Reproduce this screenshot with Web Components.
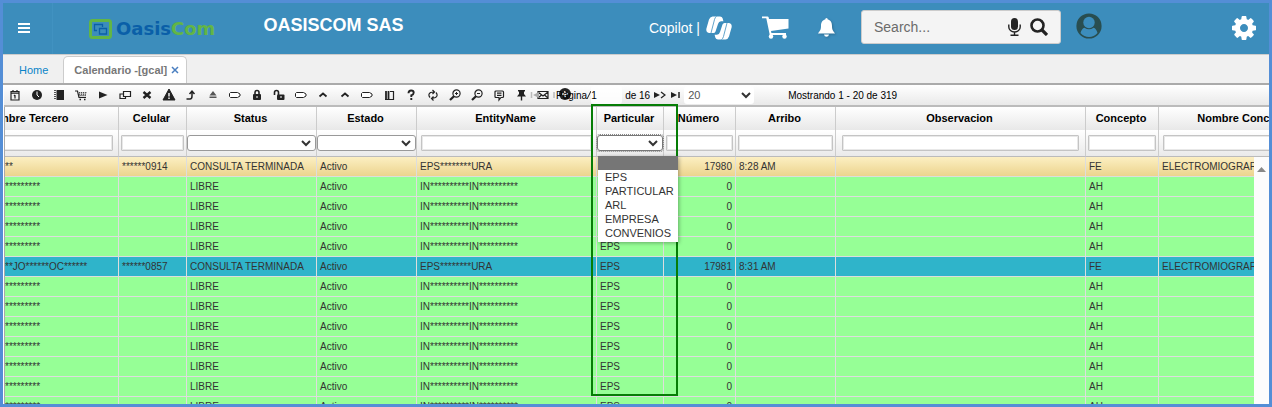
<!DOCTYPE html>
<html lang="es">
<head>
<meta charset="utf-8">
<title>OasisCom - Calendario</title>
<style>
  body { margin: 0; font-family: "Liberation Sans", Arial, sans-serif; }
</style>
</head>
<body>
<oc-app>
  <oc-topbar slot="top" company="OASISCOM SAS"></oc-topbar>
  <oc-tabs slot="tabs"></oc-tabs>
  <oc-toolbar slot="tools"></oc-toolbar>
  <oc-grid></oc-grid>
</oc-app>

<script>
class OcElement extends HTMLElement {
  mount(html) {
    this.attachShadow({ mode: 'open' }).innerHTML = html;
  }
}

customElements.define('oc-app', class extends OcElement {
  constructor() {
    super();
    this.mount(`
      <style>
        :host { display: flex; flex-direction: column; position: relative; box-sizing: border-box;
          height: 100vh; border: 3px solid #548ed6; background: #fff; overflow: hidden; }
        .panel { flex: 1; min-height: 0; display: flex; flex-direction: column;
          margin-left: 1px; border-left: 1px solid #aaa; }
        .focus { position: absolute; left: 588px; top: 101px; width: 83px; height: 288px;
          border: 2px solid #067d06; pointer-events: none; }
      </style>
      <slot name="top"></slot>
      <slot name="tabs"></slot>
      <div class="panel">
        <slot name="tools"></slot>
        <slot></slot>
      </div>
      <div class="focus"></div>`);
  }
});

customElements.define('oc-logo', class extends OcElement {
  constructor() {
    super();
    this.mount(`
      <style>
        :host { display: flex; align-items: center; gap: 4px; color: #0a5fa8;
          font: bold 18px/20px "DejaVu Sans", sans-serif; }
        svg { display: block; }
        b { color: #62b545; }
      </style>
      <svg width="23" height="20" viewBox="0 0 23 20" fill="none">
        <rect x="1.500" y="1.500" width="20" height="17" rx="2" stroke="#62b545" stroke-width="3"/>
        <path d="M8 11.500H5.500V5.500h8V8M10.500 9.500h7v5.500h-7z" stroke="#0a5fa8" stroke-width="1.300"/>
      </svg>
      <span>Oasis<b>Com</b></span>`);
  }
});

customElements.define('oc-topbar', class extends OcElement {
  constructor() {
    super();
    this.mount(`
      <style>
        :host { display: flex; align-items: center; height: 51px; box-sizing: border-box;
          background: #3c8dbc; color: #fff; font-size: 14px; }
        button, a { padding: 0; border: 0; background: none; color: inherit; display: flex; text-decoration: none; }
        svg { display: block; }
        .menu { width: 50px; height: 51px; box-sizing: border-box; padding: 20px 0 0 15px; border-right: 1px solid #4192c1; }
        oc-logo { margin: 0 0 0 36px; }
        h1 { flex: 1; margin: 0 0 8px 48px; font-size: 18px; line-height: 22px; font-weight: bold; white-space: nowrap; }
        .copilot { align-items: center; gap: 6px; white-space: nowrap; margin: 0 30px 2px 0; }
        .cart { margin: 0 29px 2px 0; }
        .bell { margin: 0 26px 2px 0; filter: drop-shadow(1px 1px 1px #2a6b92); }
        .search { display: flex; align-items: center; box-sizing: border-box; width: 200px; height: 34px;
          margin-bottom: 6px; padding: 0 12px; border: 1px solid #ccc; border-radius: 3px; background: #f4f4f4; color: #222; margin-top: 2px; }
        input { flex: 1; min-width: 0; padding: 0; border: 0; outline: 0; background: none; font: 14px "Liberation Sans", sans-serif; color: #333; }
        input::placeholder { color: #6b6b6b; opacity: 1; }
        .mic { margin-right: 9px; }
        .user { margin: 0 130px 6px 15px; }
        .gear { margin: 0 13px 2px 0; }
      </style>
      <button class="menu" aria-label="Menu"><svg width="12" height="10"><path d="M0 1h12M0 5h12M0 9h12" stroke="#fff" stroke-width="2"/></svg></button>
      <oc-logo></oc-logo>
      <h1></h1>
      <a class="copilot" href="#"><span>Copilot |</span>
        <svg width="26" height="24" viewBox="0 0 26 24" fill="#fff">
          <path d="M6.500 0.500H14q2 0 2.600 1.800l.8 3H15q-2.300.2-3 2.700L9.500 15.500q-.6 1.500-2 1.500H3Q0 16.500.3 13L3 3.500Q4 .8 6.500.5z"/>
          <path d="M19.500 23.500H12q-2 0-2.600-1.800l-.8-3H11q2.300-.2 3-2.700l2.500-7.500Q17.100 7 18.500 7H23q3 .5 2.700 4L23 20.500q-1 2.700-3.500 3z"/>
          <path d="M10.500 0.500Q9.200 1 8.500 3.500L5 17M21 7L17.500 20.500Q16.800 23 15.500 23.500" stroke="#3c8dbc" stroke-width=".8" fill="none"/>
        </svg></a>
      <button class="cart" aria-label="Carrito"><svg width="27" height="23" viewBox="0 0 27 23" fill="#fff">
        <path d="M0 .5h5.500q1 0 1.200 1L7 3h19.500v9.500L9 15l.4 2H24v2H7.800L4.300 2.300H0z"/>
        <circle cx="9" cy="20.500" r="2.200"/><circle cx="22.500" cy="20.500" r="2.200"/></svg></button>
      <button class="bell" aria-label="Avisos"><svg width="17" height="19" viewBox="0 0 17 19" fill="#fff">
        <path d="M8.500 0q1.300 0 1.300 1.500C13 2.200 14 5 14 8c0 4 1.200 5 3 7.500H0C1.800 13 3 12 3 8c0-3 1-5.800 4.200-6.500Q7.200 0 8.500 0zM6 16.500h5q-.4 2.300-2.500 2.300T6 16.500z"/></svg></button>
      <label class="search"><input type="text" placeholder="Search..." aria-label="Search">
        <svg class="mic" width="13" height="18" viewBox="0 0 13 18"><rect x="3" y="0" width="7" height="12" rx="3.500" fill="#222"/><path d="M.8 6.500v2.500a5.700 5 0 0 0 11.400 0V6.500M6.500 14v3M2.500 17.300h8" fill="none" stroke="#222" stroke-width="1.400"/></svg>
        <svg width="18" height="18" viewBox="0 0 18 18"><circle cx="7.500" cy="7.500" r="6" fill="none" stroke="#222" stroke-width="2.600"/><path d="M12 12l5 5" stroke="#222" stroke-width="3.200"/></svg>
      </label>
      <a class="user" href="#" aria-label="Usuario"><svg width="26" height="26" viewBox="0 0 26 26" fill="none" stroke="#294e50">
        <circle cx="13" cy="13" r="11.600" fill="#294e50" stroke-width="2"/>
        <circle cx="13" cy="9.500" r="5.700" fill="#3c8dbc" stroke="none"/>
        <path d="M4.500 20q1.200-4.500 4-5.200 4.500 3 9 0 2.800.7 4 5.200-3.500 4-8.500 4t-8.500-4z" fill="#3c8dbc" stroke="none"/></svg></a>
      <button class="gear" aria-label="Ajustes"><svg width="24" height="24" viewBox="128 128 1536 1536" fill="#fff"><path d="M1152 896q0-106-75-181t-181-75-181 75-75 181 75 181 181 75 181-75 75-181zm512-109v222q0 12-8 23t-20 13l-185 28q-19 54-39 91 35 50 107 138 10 12 10 25t-9 23q-27 37-99 108t-94 71q-12 0-26-9l-138-108q-44 23-91 38-16 136-29 186-7 28-36 28h-222q-14 0-24.500-8.500t-11.500-21.500l-28-184q-49-16-90-37l-141 107q-10 9-25 9-14 0-25-11-126-114-165-168-7-10-7-23 0-12 8-23 15-21 51-66.500t54-70.500q-27-50-41-99l-183-27q-13-2-21-12.500t-8-23.500v-222q0-12 8-23t19-13l186-28q14-46 39-92-40-57-107-138-10-12-10-24 0-10 9-23 26-36 98.500-107.500t94.500-71.500q13 0 26 10l138 107q44-23 91-38 16-136 29-186 7-28 36-28h222q14 0 24.500 8.500t11.500 21.500l28 184q49 16 90 37l142-107q9-9 24-9 13 0 25 10 129 119 165 170 7 8 7 22 0 12-8 23-15 21-51 66.500t-54 70.500q26 50 41 98l183 28q13 2 21 12.500t8 23.500z"/></svg></button>`);
  }
  connectedCallback() {
    this.shadowRoot.querySelector('h1').textContent = this.getAttribute('company');
  }
});

customElements.define('oc-tabs', class extends OcElement {
  constructor() {
    super();
    this.mount(`
      <style>
        :host { display: flex; align-items: flex-end; height: 31px; box-sizing: border-box; background: #f0f0f0;
          border-top: 1px solid #ccc; border-bottom: 2px solid #aaa; font-size: 11px; line-height: 26px; }
        a { text-decoration: none; color: #0a84c8; padding: 0 15px 0 16px; }
        .open { display: flex; align-items: center; gap: 4px; padding: 0 7px 0 10px; height: 26px; background: #fff; color: #777;
          border: 1px solid #ccc; border-bottom: 0; border-radius: 5px 5px 0 0; font-weight: bold; }
        button { padding: 0; border: 0; background: none; }
        svg { display: block; }
      </style>
      <a href="#">Home</a>
      <div class="open"><span>Calendario -[gcal]</span>
        <button aria-label="Cerrar"><svg width="8" height="8"><path d="M1 1l6 6M7 1L1 7" stroke="#4a7fc0" stroke-width="1.500"/></svg></button></div>`);
  }
});

const S = 'fill="none" stroke="#222" stroke-width="1.200"';
const label = `<path d="M1.500 3.500h7l2.500 1.500v2l-2.500 1.500h-7l-1-1v-3z" fill="#fff" stroke="#222"/>`;
const caret = `<path d="M2.500 7.500L6 4.500l3.500 3" fill="none" stroke="#222" stroke-width="1.800"/>`;
const ICONS = [
  ['Calendario', `<path d="M2 2.500h8v8.500H2zM2 4.200h8M4 1v1.500M8 1v1.500M6 6v3.500M5 7l1-1" ${S}/>`],
  ['Hora', `<circle cx="6" cy="6" r="5" fill="#222"/><path d="M6 2.500V6l2 2" stroke="#fff" fill="none"/>`],
  ['Libro', `<path d="M3.500 1H11v10H3.500z" fill="#222"/><path d="M2 1v10" stroke="#222" stroke-width="1.500" stroke-dasharray="1 1"/>`],
  ['Compras', `<path d="M0 2h2.500l1.500 6.500h7" ${S}/><path d="M4 3.700h8M4 5.200h7.500M4.500 6.700H11" stroke="#222" stroke-dasharray="1.200 .7"/><path d="M4.500 10.500h1.500M9 10.500h1.500" stroke="#222" stroke-width="1.500"/>`],
  ['Ejecutar', `<path d="M2 2.500L10.500 6 2 9.500z" fill="#222"/>`],
  ['Duplicar', `<path d="M4.500 2.500h7v5h-7zM4.500 5H1v4.500h5.500v-2" ${S}/>`],
  ['Borrar', `<path d="M2.500 3l7 6M9.500 3l-7 6" stroke="#222" stroke-width="2.400"/>`],
  ['Alerta', `<path d="M6 0l6 11H0z" fill="#222" stroke="#222" stroke-linejoin="round"/><path d="M6 4v3.500M6 8.500V10" stroke="#fff" stroke-width="1.400"/>`],
  ['Subir', `<path d="M1.500 10H5q2 0 2-3V3M4.500 5L7 2.200 9.500 5" fill="none" stroke="#222" stroke-width="1.500"/>`],
  ['Expulsar', `<path d="M6 2l3.500 4.500h-7zM2.500 7.500h7V9h-7z" fill="#555"/>`],
  ['Etiqueta', label],
  ['Bloquear', `<rect x="2" y="5" width="8" height="6" rx="1" fill="#222"/><path d="M4 5V3.500a2 2 0 0 1 4 0V5" fill="none" stroke="#222" stroke-width="1.600"/><path d="M6 7v2" stroke="#fff"/>`],
  ['Desbloquear', `<rect x="4" y="5.500" width="7.500" height="5.500" rx="1" fill="#222"/><path d="M1.500 6V3.500a2 2 0 0 1 4 0V6" fill="none" stroke="#222" stroke-width="1.600"/><path d="M8 7v2" stroke="#fff"/>`],
  ['Etiqueta', label],
  ['Arriba', caret],
  ['Arriba', caret],
  ['Etiqueta', label],
  ['Archivo', `<path d="M3 2v8.500M5.500 2v8.500" stroke="#222" stroke-width="1.800"/><path d="M7 2.500h3.500v8H2" ${S}/>`],
  ['Ayuda', `<path d="M3.500 4.200q0-2.700 2.600-2.700t2.600 2.300Q8.700 5.500 6.300 6.300V8M6.300 9v2" fill="none" stroke="#222" stroke-width="1.900"/>`],
  ['Actualizar', `<path d="M3 8.500Q.5 5.500 3.500 3.500L7 3M5.500 1L7.500 3 5.500 5M9 3.500q2.500 3-.5 5L5 9.500M6.500 7.500l-2 2 2 2" ${S}/>`],
  ['Acercar', `<circle cx="7.500" cy="4.500" r="3.600" ${S}/><path d="M7.500 3v3M6 4.500h3" stroke="#222"/><path d="M5 7.200L1 11" stroke="#222" stroke-width="2.200"/>`],
  ['Alejar', `<circle cx="7.500" cy="4.500" r="3.600" ${S}/><path d="M6 4.500h3" stroke="#222"/><path d="M5 7.200L1 11" stroke="#222" stroke-width="2.200"/>`],
  ['Comentario', `<path d="M3 2h6.500q1 0 1 1v4.500q0 1-1 1H8L6 11V8.500H3q-1 0-1-1V3q0-1 1-1zM4 4.200h4.500M4 6.300h4.500" ${S}/>`],
  ['Fijar', `<path d="M3 1h7v1.500H9V5l2 2.500H2L4 5V2.500H3z" fill="#222"/><path d="M6.500 7v4.500" stroke="#222" stroke-width="1.400"/>`],
  ['Correo', `<path d="M1 2.500h10v7H1zM1 3l5 4 5-4M1 9l3.500-3M11 9L7.500 6" ${S}/>`],
  ['Agregar', `<circle cx="6" cy="5" r="6" fill="#222"/><path d="M6 2v6M3 5h6" stroke="#fff" stroke-width="1.500"/>`]
];

customElements.define('oc-toolbar', class extends OcElement {
  constructor() {
    super();
    const buttons = ICONS.map(([name, art]) =>
      `<button aria-label="${name}"><svg width="12" height="12" viewBox="0 0 12 12" overflow="visible">${art}</svg></button>`).join('');
    this.mount(`
      <style>
        :host { display: flex; position: relative; height: 20px; border-bottom: 2px solid #bbb; margin-left: -1px;
          background: linear-gradient(#fff, #e9e9e9); font-size: 10px; color: #000; }
        button { display: flex; justify-content: center; align-items: center; width: 22px; padding: 0; border: 0; background: none; }
        svg { display: block; }
        .pager { position: absolute; left: 522px; top: 0; height: 20px; display: flex; align-items: center; white-space: nowrap; }
        .pager button { width: 16px; }
        .pager .first { width: 30px; justify-content: flex-start; }
        input { box-sizing: border-box; width: 31px; height: 18px; padding: 0; border: 0; border-radius: 3px;
          background: #fffc; font: 10px "Liberation Sans", sans-serif; margin: 0 3px 0 0; }
        .next { margin-left: 2px; }
        select { appearance: none; box-sizing: border-box; width: 70px; height: 18px; padding: 0 0 0 4px; border: 0; border-radius: 3px; color: #555;
          font: 11px "Liberation Sans", sans-serif; margin: 0 34px 0 0;
          background: #fff url("data:image/svg+xml,%3Csvg xmlns='http://www.w3.org/2000/svg' width='10' height='7'%3E%3Cpath d='M1 1l4 4 4-4' fill='none' stroke='%23333' stroke-width='2'/%3E%3C/svg%3E") no-repeat right 3px center; }
      </style>
      ${buttons}
      <div class="pager">
        <button class="first" aria-label="Anterior"><svg width="30" height="12"><path d="M5.500 3v6M28 3v6" stroke="#bbb" stroke-width="1.500"/><path d="M13 3v6L7 6z" fill="#aaa"/></svg></button>
        <label for="page">Página</label>
        <svg width="4" height="12"><path d="M0 10L4 2" stroke="#222"/></svg>
        <input id="page" type="text" value="1">
        <span>de 16</span>
        <button class="next" aria-label="Siguiente"><svg width="12" height="12"><path d="M0 3l6 3-6 3z" fill="#222"/><path d="M7 3l4 3-4 3" fill="none" stroke="#222" stroke-width="1.300"/></svg></button>
        <button aria-label="Última"><svg width="12" height="12"><path d="M1 3l6 3-6 3z" fill="#222"/><path d="M9 3v6" stroke="#222" stroke-width="1.500"/></svg></button>
        <select aria-label="Filas"><option>20</option></select>
        <span>Mostrando 1 - 20 de 319</span>
      </div>`);
  }
});

customElements.define('oc-options', class extends OcElement {
  constructor() {
    super();
    this.mount(`
      <style>
        :host { display: block; }
        ul { margin: 0; padding: 0 0 2px; list-style: none; background: #fff; color: #333; font-size: 11px; line-height: 14px;
          text-align: left; font-weight: normal; box-shadow: 1px 1px 4px #0005; }
        li { height: 14px; padding-left: 7px; white-space: nowrap; }
        .on { background: #767676; }
      </style>
      <ul role="listbox" aria-label="Particular">
        <li class="on" role="option" aria-label="Todos" aria-selected="true"></li>
        <li role="option">EPS</li><li role="option">PARTICULAR</li><li role="option">ARL</li>
        <li role="option">EMPRESA</li><li role="option">CONVENIOS</li>
      </ul>`);
  }
});

const COLUMNS = [
  ['Nombre Tercero', 182], ['Celular', 68], ['Status', 130, 'select'], ['Estado', 100, 'select'], ['EntityName', 180],
  ['Particular', 67, 'open'], ['Número', 72], ['Arribo', 100], ['Observacion', 250], ['Concepto', 73], ['Nombre Concepto', 175]
];
const free = ['*********', '', 'LIBRE', 'Activo', 'IN**********IN**********', 'EPS', '0', '', '', 'AH', ''];
const done = (who, cel, num, time) =>
  [who, cel, 'CONSULTA TERMINADA', 'Activo', 'EPS********URA', 'EPS', num, time, '', 'FE', 'ELECTROMIOGRAFIA'];
const ROWS = [
  done('**', '******0914', '17980', '8:28 AM'), free, free, free, free,
  done('**JO******OC******', '******0857', '17981', '8:31 AM'), free, free, free, free, free, free, free
];

customElements.define('oc-grid', class extends OcElement {
  constructor() {
    super();
    const field = ([name, , kind]) => {
      if (!kind) return `<input type="text" aria-label="${name}">`;
      return `<select class="${kind}" aria-label="${name}"><option></option></select>` +
        (kind === 'open' ? '<oc-options></oc-options>' : '');
    };
    this.mount(`
      <style>
        :host { display: block; flex: 1; min-height: 0; position: relative; overflow: hidden; }
        table { width: 1397px; table-layout: fixed; border-collapse: separate; border-spacing: 0; margin-left: -68px; }
        th, td { box-sizing: border-box; padding: 0; border-right: 1px solid #ccc; white-space: nowrap; }
        th { height: 23px; padding-right: 2px; font-size: 11px; line-height: 23px; text-align: center; color: #000; background: linear-gradient(#fff, #e8e8e8); }
        .filter td { height: 27px; text-align: center; border-bottom: 1px solid #bbb; background: linear-gradient(#fff, #eaeaea); position: relative; line-height: 16px; }
        input, select { box-sizing: border-box; display: block; height: 16px; padding: 0; background-color: #fff; font: 10px "Liberation Sans", sans-serif; }
        input { width: 95%; margin: 0 auto; border: 1px solid #c4c4c4; box-shadow: inset 0 0 0 1px #e8e8e8; border-radius: 1px; outline: 0; }
        select { appearance: none; width: 100%; margin: 0; border: 1px solid #999; border-radius: 3px;
          background: #fff url("data:image/svg+xml,%3Csvg xmlns='http://www.w3.org/2000/svg' width='10' height='7'%3E%3Cpath d='M1 1l4 4 4-4' fill='none' stroke='%23333' stroke-width='2'/%3E%3C/svg%3E") no-repeat right 4px center; }
        .open { border-color: #777; outline: 1px dotted #888; outline-offset: 0; }
        oc-options { position: absolute; left: 1px; top: 26px; width: 80px; z-index: 2; }
        tbody td { height: 20px; padding: 0 3px; border-right-color: #ddd; border-bottom: 1px solid #ddd; background: #96ff96;
          font-size: 10px; line-height: 19px; color: #333; overflow: hidden; }
        tbody td:first-child { padding-left: 68px; }
        tbody td:nth-child(7) { text-align: right; }
        tbody tr:nth-child(1) td { background: linear-gradient(#fcefc2, #ecd48e); }
        tbody tr:nth-child(6) td { background: #2fb4ca; }
        .scroll { position: absolute; right: 0; top: 50px; bottom: 0; width: 15px; background: #fcfcfc; }
        .scroll svg { display: block; margin: 10px 0 0 3px; }
      </style>
      <table>
        <colgroup>${COLUMNS.map(c => `<col style="width:${c[1]}px">`).join('')}</colgroup>
        <thead>
          <tr>${COLUMNS.map(c => `<th scope="col">${c[0]}</th>`).join('')}</tr>
          <tr class="filter">${COLUMNS.map(c => `<td>${field(c)}</td>`).join('')}</tr>
        </thead>
        <tbody>${ROWS.map(r => `<tr>${r.map(v => `<td>${v}</td>`).join('')}</tr>`).join('')}</tbody>
      </table>
      <div class="scroll"><svg width="9" height="5"><path d="M0 5l4.500-5L9 5z" fill="#888"/></svg></div>`);
  }
});
</script>
</body>
</html>
